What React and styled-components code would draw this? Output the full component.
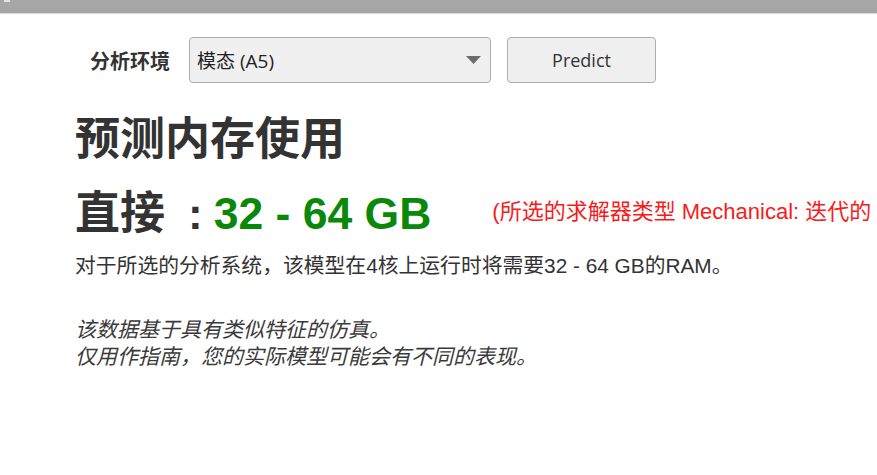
import React from "react";
import styled, { createGlobalStyle } from "styled-components";

const GlobalStyle = createGlobalStyle`
  html, body { margin: 0; padding: 0; background: #fff; }
  body {
    width: 877px;
    height: 475px;
    overflow: hidden;
    font-family: "Liberation Sans", "Noto Sans CJK SC", sans-serif;
    color: #333;
  }
`;

const TopBar = styled.div`
  height: 13px;
  background: #a6a6a6;
  border-bottom: 1px solid #d9d9d9;
  display: flex;
  align-items: flex-start;
`;

const CornerMark = styled.span`
  display: block;
  width: 6px;
  height: 2px;
  margin-left: 4px;
  background: #e4e4e4;
`;

const Content = styled.main`
  padding: 23px 0 0 75px;
  display: flex;
  flex-direction: column;
`;

const Toolbar = styled.div`
  display: flex;
  align-items: center;
  gap: 16px;
  margin-left: 15px;
  height: 46px;
`;

const Label = styled.span`
  margin-right: 3px;
  font-family: "Noto Sans CJK SC", sans-serif;
  font-weight: 700;
  font-size: 20px;
  color: #333;
`;

const SelectBox = styled.div`
  box-sizing: border-box;
  width: 302px;
  height: 46px;
  display: flex;
  align-items: center;
  justify-content: space-between;
  padding: 0 9px 0 7px;
  background: #f0f0f0;
  border: 1px solid #adadad;
  border-radius: 4px;
  font-family: "Open Sans", "Noto Sans CJK SC", sans-serif;
  font-size: 19px;
  color: #222;
`;

const Arrow = styled.svg`
  width: 15px;
  height: 8px;
  display: block;
`;

const Button = styled.button`
  box-sizing: border-box;
  width: 149px;
  height: 46px;
  background: #efefef;
  border: 1px solid #adadad;
  border-radius: 4px;
  font-family: "Open Sans", sans-serif;
  font-size: 18px;
  color: #333;
  padding: 0;
  cursor: pointer;
`;

const Heading = styled.h1`
  margin: 26px 0 0;
  font-family: "Noto Sans CJK SC", sans-serif;
  font-weight: 700;
  font-size: 45px;
  line-height: 53px;
  color: #333;
`;

const ResultLine = styled.div`
  margin-top: 21px;
  display: flex;
  align-items: baseline;
  white-space: nowrap;
  line-height: 53px;
`;

const ResultLabel = styled.span`
  font-family: "Noto Sans CJK SC", sans-serif;
  font-weight: 700;
  font-size: 45px;
  color: #333;
`;

const Colon = styled.span`
  margin: 0 11px 0 23px;
  font-family: "Liberation Sans", sans-serif;
  font-weight: 700;
  font-size: 44px;
  color: #333;
`;

const ResultValue = styled.span`
  font-family: "Liberation Sans", sans-serif;
  font-weight: 700;
  font-size: 44.5px;
  color: #0a880a;
`;

const RedNote = styled.span`
  align-self: center;
  margin-left: 61px;
  font-family: "Liberation Sans", "Noto Sans CJK SC", sans-serif;
  font-size: 22px;
  line-height: 26px;
  color: #f71b1b;
`;

const Paragraph = styled.p`
  margin: 12px 0 0;
  font-family: "Liberation Sans", "Noto Sans CJK SC", sans-serif;
  font-size: 20.8px;
  line-height: 28px;
  color: #333;
`;

const Note = styled.p`
  margin: 36px 0 0;
  font-family: "Liberation Sans", "Noto Sans CJK SC", sans-serif;
  font-style: italic;
  font-size: 21px;
  line-height: 27px;
  color: #3a3a3a;
`;

export default function App() {
  return (
    <>
      <GlobalStyle />
      <TopBar>
        <CornerMark />
      </TopBar>
      <Content>
        <Toolbar>
          <Label>分析环境</Label>
          <SelectBox>
            <span>模态 (A5)</span>
            <Arrow viewBox="0 0 15 8">
              <polygon points="0,0 15,0 7.5,8" fill="#6b6b6b" />
            </Arrow>
          </SelectBox>
          <Button>Predict</Button>
        </Toolbar>
        <Heading>预测内存使用</Heading>
        <ResultLine>
          <ResultLabel>直接</ResultLabel>
          <Colon>:</Colon>
          <ResultValue>32 - 64 GB</ResultValue>
          <RedNote>(所选的求解器类型 Mechanical: 迭代的</RedNote>
        </ResultLine>
        <Paragraph>对于所选的分析系统，该模型在4核上运行时将需要32 - 64 GB的RAM。</Paragraph>
        <Note>
          该数据基于具有类似特征的仿真。
          <br />
          仅用作指南，您的实际模型可能会有不同的表现。
        </Note>
      </Content>
    </>
  );
}
